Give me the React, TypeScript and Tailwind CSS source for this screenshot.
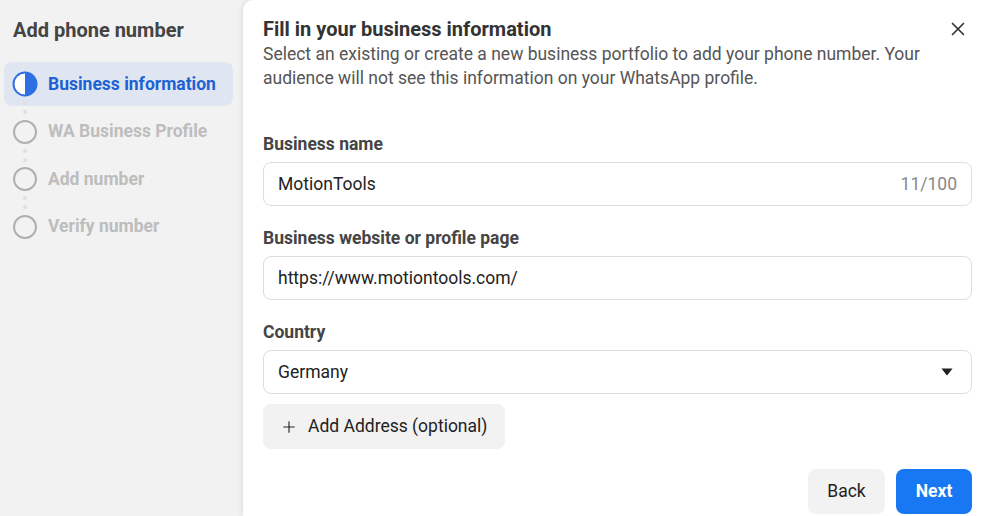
import { Plus, X } from "lucide-react";

const steps = [
  { label: "Business information", active: true },
  { label: "WA Business Profile", active: false },
  { label: "Add number", active: false },
  { label: "Verify number", active: false },
];

const StepIcon = ({ active }: { active: boolean }) =>
  active ? (
    <svg width="26" height="26" viewBox="0 0 26 26">
      <circle cx="13" cy="13" r="11.5" fill="white" stroke="#2f6fe4" strokeWidth="2" />
      <path d="M13 1.5 A11.5 11.5 0 0 1 13 24.5 Z" fill="#2f6fe4" />
    </svg>
  ) : (
    <svg width="26" height="26" viewBox="0 0 26 26">
      <circle cx="13" cy="13" r="11" fill="none" stroke="#b0b0b0" strokeWidth="2" />
    </svg>
  );

const Dots = () => (
  <div className="flex flex-col items-center gap-[5px] w-[26px] ml-[8px]">
    <div className="w-[4px] h-[4px] rounded-full bg-[#e0e0e0]" />
    <div className="w-[4px] h-[4px] rounded-full bg-[#e0e0e0]" />
  </div>
);

const Field = ({
  label,
  children,
}: {
  label: string;
  children: React.ReactNode;
}) => (
  <div className="flex flex-col">
    <label className="text-[17.5px] font-bold text-[#444] leading-[20px] mb-[8px]">
      {label}
    </label>
    {children}
  </div>
);

export default function App() {
  return (
    <div
      className="w-[990px] h-[516px] flex bg-[#f2f2f2] overflow-hidden"
      style={{ fontFamily: "Roboto, 'Liberation Sans', sans-serif" }}
    >
      {/* Sidebar */}
      <aside className="w-[243px] flex-shrink-0 flex flex-col pt-[18px] pl-[4px] pr-[10px]">
        <h2 className="text-[20px] font-bold text-[#444] leading-[24px] pl-[9px] mb-[20px]">
          Add phone number
        </h2>
        <div className="flex flex-col">
          {steps.map((step, i) => (
            <div key={step.label} className="flex flex-col">
              <div
                className={`flex items-center gap-[10px] h-[44px] rounded-lg pl-[8px] ${
                  step.active ? "bg-[#e0e6f1]" : ""
                }`}
              >
                <StepIcon active={step.active} />
                <span
                  className={`text-[17.5px] font-bold ${
                    step.active ? "text-[#1c62d4]" : "text-[#bdbdbd]"
                  }`}
                >
                  {step.label}
                </span>
              </div>
              {i < steps.length - 1 && (
                <div className="h-[3.5px] flex items-center">
                  <Dots />
                </div>
              )}
            </div>
          ))}
        </div>
      </aside>

      {/* Main panel */}
      <main className="flex-1 bg-white rounded-tl-[10px] shadow-[0_0_6px_rgba(0,0,0,0.12)] pl-[20px] pr-[18px] pt-[17px] flex flex-col">
        <div className="flex justify-between items-start">
          <div className="flex flex-col">
            <h1 className="text-[20px] font-bold text-[#333] leading-[24px]">
              Fill in your business information
            </h1>
            <p className="text-[17.5px] text-[#555] leading-[24px] max-w-[670px] mt-[1px]">
              Select an existing or create a new business portfolio to add your phone number. Your
              audience will not see this information on your WhatsApp profile.
            </p>
          </div>
          <X className="w-[22px] h-[22px] text-[#333] mt-[1px] mr-[3px]" strokeWidth={1.8} />
        </div>

        <div className="flex flex-col gap-[22px] mt-[44px]">
          <Field label="Business name">
            <div className="h-[44px] border border-[#ddd] rounded-lg flex items-center justify-between px-[14px]">
              <span className="text-[17.5px] text-[#222]">MotionTools</span>
              <span className="text-[17.5px] text-[#888]">11/100</span>
            </div>
          </Field>
          <Field label="Business website or profile page">
            <div className="h-[44px] border border-[#ddd] rounded-lg flex items-center px-[14px]">
              <span className="text-[17.5px] text-[#222]">https://www.motiontools.com/</span>
            </div>
          </Field>
          <Field label="Country">
            <div className="h-[44px] border border-[#ddd] rounded-lg flex items-center justify-between px-[14px]">
              <span className="text-[17.5px] text-[#222]">Germany</span>
              <svg width="12" height="8" viewBox="0 0 12 8" className="mr-[4px]">
                <path d="M0.5 0.5 H11.5 L6.5 7 Q6 7.6 5.5 7 Z" fill="#222" />
              </svg>
            </div>
          </Field>
        </div>

        <div className="mt-[10px]">
          <button className="h-[45px] px-[18px] bg-[#f2f2f2] rounded-lg flex items-center gap-[10px] text-[17.5px] text-[#222]">
            <Plus className="w-[18px] h-[18px] -ml-[1px]" strokeWidth={1.5} />
            Add Address (optional)
          </button>
        </div>

        <div className="flex justify-end gap-[11px] mt-[20px]">
          <button className="h-[45px] w-[77px] bg-[#f2f2f2] rounded-lg text-[17.5px] text-[#222]">
            Back
          </button>
          <button className="h-[45px] w-[76px] bg-[#1877f2] rounded-lg text-[17.5px] font-bold text-white">
            Next
          </button>
        </div>
      </main>
    </div>
  );
}
